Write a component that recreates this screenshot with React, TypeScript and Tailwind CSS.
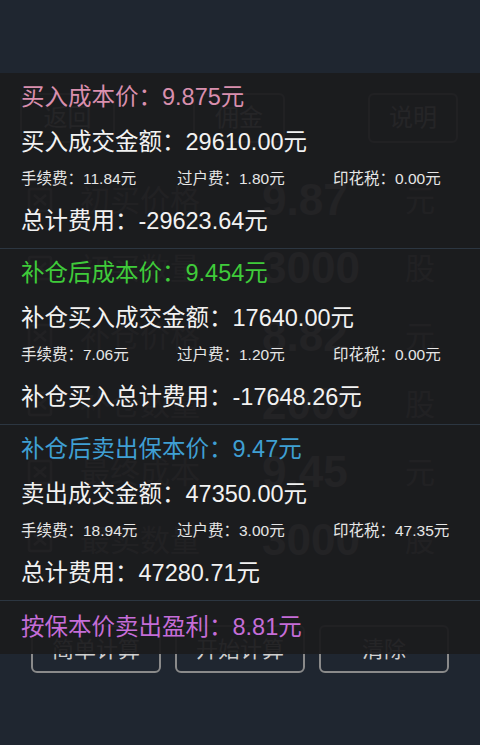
import React from "react";

const font = "font-['Liberation_Sans','Noto_Sans_CJK_SC',sans-serif]";

type Fee = { a: string; b: string; c: string };

type Section = {
  title: string;
  color: string;
  amount: string;
  fees: Fee;
  total: string;
};

const sections: Section[] = [
  {
    title: "买入成本价：9.875元",
    color: "text-[#d98fae]",
    amount: "买入成交金额：29610.00元",
    fees: { a: "手续费：11.84元", b: "过户费：1.80元", c: "印花税：0.00元" },
    total: "总计费用：-29623.64元",
  },
  {
    title: "补仓后成本价：9.454元",
    color: "text-[#3fcb3a]",
    amount: "补仓买入成交金额：17640.00元",
    fees: { a: "手续费：7.06元", b: "过户费：1.20元", c: "印花税：0.00元" },
    total: "补仓买入总计费用：-17648.26元",
  },
  {
    title: "补仓后卖出保本价：9.47元",
    color: "text-[#3f9fd3]",
    amount: "卖出成交金额：47350.00元",
    fees: { a: "手续费：18.94元", b: "过户费：3.00元", c: "印花税：47.35元" },
    total: "总计费用：47280.71元",
  },
];

// rows of the calculator that sit behind the result panel
const inputs = [
  { label: "初买价格", value: "9.87", unit: "元" },
  { label: "初买数量", value: "3000", unit: "股" },
  { label: "补仓价格", value: "8.82", unit: "元" },
  { label: "补仓数量", value: "2000", unit: "股" },
  { label: "最终成本", value: "9.45", unit: "元" },
  { label: "最卖数量", value: "3000", unit: "股" },
];

function BoxIcon() {
  return (
    <svg width="28" height="28" viewBox="0 0 28 28" fill="none" stroke="currentColor" strokeWidth="2.5">
      <rect x="3" y="3" width="22" height="22" rx="2" />
      <path d="M8 9l12 10M20 9L8 19" />
    </svg>
  );
}

export default function App() {
  return (
    <div className={`relative w-[480px] h-[745px] overflow-hidden bg-[#1f2630] ${font}`}>
      {/* calculator underneath */}
      <div className="flex flex-col pt-[93px]">
        <div className="flex h-[50px] px-[20px] justify-between">
          <div className="w-[95px] rounded-md border-2 border-[#8a8a8a] flex items-center justify-center text-[24px] text-[#cfcfcf]">
            返回
          </div>
          <div className="w-[92px] ml-[78px] rounded-md border-2 border-[#8a8a8a] flex items-center justify-center text-[24px] text-[#cfcfcf]">
            佣金
          </div>
          <div className="flex-1" />
          <div className="w-[90px] mr-[2px] rounded-md border-2 border-[#8a8a8a] flex items-center justify-center text-[24px] text-[#cfcfcf]">
            说明
          </div>
        </div>
        <div className="flex flex-col mt-[23px]">
          {inputs.map((r, i) => (
            <div key={i} className="flex h-[68px] items-center text-[#8c8c8c]">
              <div className="w-[80px] flex justify-center">
                <BoxIcon />
              </div>
              <div className="w-[182px] text-[30px]">{r.label}</div>
              <div className="w-[143px] text-[44px] font-bold text-[#a8a8a8]">{r.value}</div>
              <div className="text-[30px]">{r.unit}</div>
            </div>
          ))}
        </div>
        <div className="flex gap-[14px] px-[31px] mt-[51px]">
          {["简单计算", "开始计算", "清除"].map((t) => (
            <div
              key={t}
              className="w-[131px] h-[48px] rounded-md border-2 border-[#8a8a8a] flex items-center justify-center text-[22px] text-[#cfcfcf]"
            >
              {t}
            </div>
          ))}
        </div>
      </div>

      {/* result panel over it */}
      <div className="absolute left-0 right-0 top-[73px] h-[581px] bg-[#1b1b1d]/[0.95] flex flex-col">
        {sections.map((s, i) => (
          <div key={i} className="flex flex-col px-[21px] border-b border-[#2c3641]">
            <div className={`h-[50px] flex items-center text-[23.5px] ${s.color}`}>{s.title}</div>
            <div className="h-[40px] flex items-center text-[23.5px] text-[#f2f2f2]">{s.amount}</div>
            <div className="h-[32px] flex items-center text-[15.5px] text-[#e6e6e6]">
              <div className="w-[156px]">{s.fees.a}</div>
              <div className="w-[156px]">{s.fees.b}</div>
              <div>{s.fees.c}</div>
            </div>
            <div className="h-[53px] flex items-center text-[23.5px] text-[#f2f2f2]">{s.total}</div>
          </div>
        ))}
        <div className="h-[55px] flex items-center px-[21px] text-[23.5px] text-[#c56dd8]">
          按保本价卖出盈利：8.81元
        </div>
      </div>
    </div>
  );
}
